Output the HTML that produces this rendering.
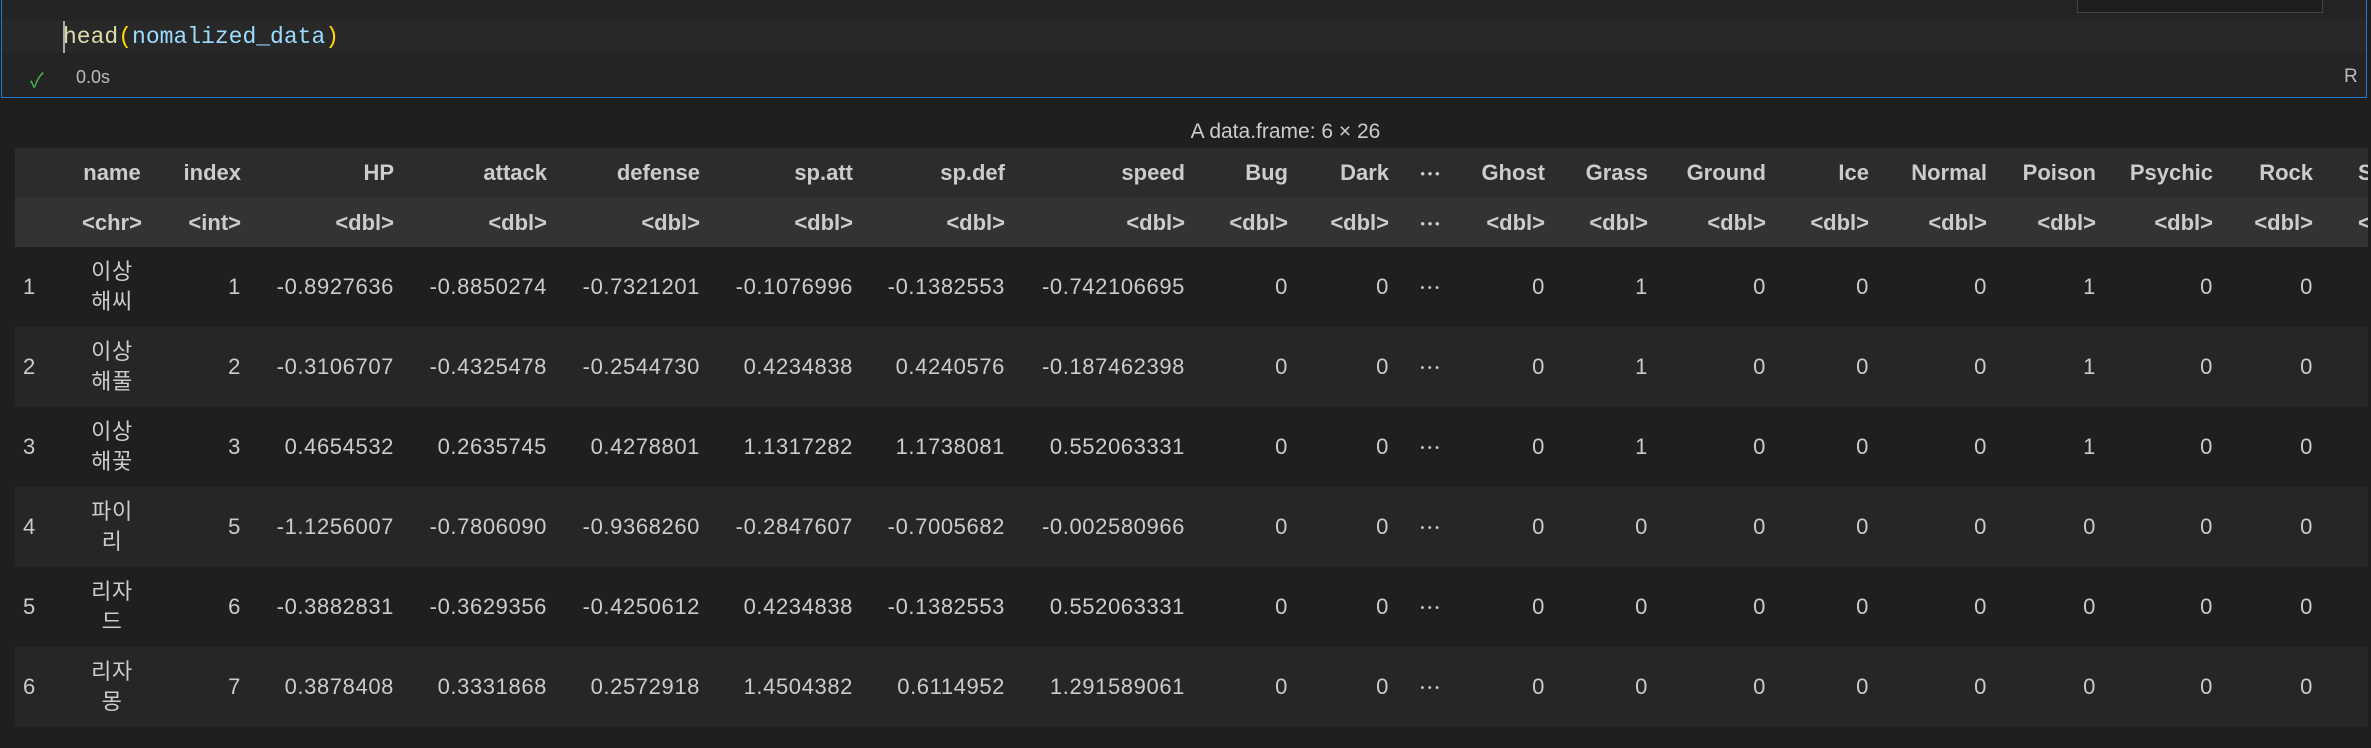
<!DOCTYPE html>
<html><head><meta charset="utf-8"><style>
body{margin:0;width:2371px;height:738px;overflow:hidden;background:#1f1f1f;font-family:"Liberation Sans","Noto Sans CJK KR",sans-serif;color:#cccccc;position:relative}
.cell{position:absolute;left:1px;top:-2px;width:2366px;height:100px;background:#242424;border:1px solid #1f78c8;box-sizing:border-box}
.band{position:absolute;left:0;right:0;top:21px;height:32px;background:#282828}
.code{position:absolute;left:63px;top:22px;font:23px "Liberation Mono",monospace;line-height:30px}
.cur{position:absolute;left:63px;top:21px;width:2px;height:32px;background:#aaa}
.tick{position:absolute;left:30px;top:64px;color:#4fb04f;font-size:20px}
.time{position:absolute;left:76px;top:67px;font-size:18px;color:#bbb}
.r{position:absolute;left:2344px;top:66px;font-size:19px;color:#bbb}
.box{position:absolute;left:2077px;top:-2px;width:244px;height:13px;border:1px solid #444;background:#1e1e1e}
.cap{position:absolute;left:0;width:2571px;top:120px;text-align:center;font-size:21px;color:#ccc}
.wrap{position:absolute;left:15px;top:148px;width:2353px;height:600px;overflow:hidden}
table{border-collapse:collapse;table-layout:fixed;width:2398px;font-size:22px;letter-spacing:0.6px}
td{padding:0;text-align:right;white-space:nowrap;overflow:visible}
tr.h1{background:#2c2c2c;height:50px;font-weight:bold;letter-spacing:0}
tr.h2{background:#333;height:49px;font-weight:bold;letter-spacing:0}
tr.d{height:80px;background:#1f1f1f}
tr.e{height:80px;background:#262626}
td.n{text-align:left;padding-left:8px}
td.nm{text-align:center;line-height:30px}
td.dot{text-align:center}
</style></head><body>
<div class="cell"><div class="band"></div></div>
<div class="box"></div>
<div class="cur"></div>
<div class="code"><span style="color:#dcdcaa">head</span><span style="color:#ffd700">(</span><span style="color:#9cdcfe">nomalized_data</span><span style="color:#ffd700">)</span></div>
<div class="tick">✓</div><div class="time">0.0s</div><div class="r">R</div>
<div class="cap">A data.frame: 6 × 26</div>
<div class="wrap"><table>
<colgroup><col style="width:55px"><col style="width:84px"><col style="width:87px"><col style="width:153px"><col style="width:153px"><col style="width:153px"><col style="width:153px"><col style="width:152px"><col style="width:180px"><col style="width:103px"><col style="width:101px"><col style="width:82px"><col style="width:74px"><col style="width:103px"><col style="width:118px"><col style="width:103px"><col style="width:118px"><col style="width:109px"><col style="width:117px"><col style="width:100px"><col style="width:100px"></colgroup>
<tr class="h1"><td></td><td class="nm">name</td><td>index</td><td>HP</td><td>attack</td><td>defense</td><td>sp.att</td><td>sp.def</td><td>speed</td><td>Bug</td><td>Dark</td><td class="dot">⋯</td><td>Ghost</td><td>Grass</td><td>Ground</td><td>Ice</td><td>Normal</td><td>Poison</td><td>Psychic</td><td>Rock</td><td style="text-align:left;padding-left:45px">Steel</td></tr>
<tr class="h2"><td></td><td class="nm">&lt;chr&gt;</td><td>&lt;int&gt;</td><td>&lt;dbl&gt;</td><td>&lt;dbl&gt;</td><td>&lt;dbl&gt;</td><td>&lt;dbl&gt;</td><td>&lt;dbl&gt;</td><td>&lt;dbl&gt;</td><td>&lt;dbl&gt;</td><td>&lt;dbl&gt;</td><td class="dot">⋯</td><td>&lt;dbl&gt;</td><td>&lt;dbl&gt;</td><td>&lt;dbl&gt;</td><td>&lt;dbl&gt;</td><td>&lt;dbl&gt;</td><td>&lt;dbl&gt;</td><td>&lt;dbl&gt;</td><td>&lt;dbl&gt;</td><td style="text-align:left;padding-left:45px">&lt;dbl&gt;</td></tr>
<tr class="d"><td class="n">1</td><td class="nm">이상<br>해씨</td><td>1</td><td>-0.8927636</td><td>-0.8850274</td><td>-0.7321201</td><td>-0.1076996</td><td>-0.1382553</td><td>-0.742106695</td><td>0</td><td>0</td><td class="dot">⋯</td><td>0</td><td>1</td><td>0</td><td>0</td><td>0</td><td>1</td><td>0</td><td>0</td><td></td></tr>
<tr class="e"><td class="n">2</td><td class="nm">이상<br>해풀</td><td>2</td><td>-0.3106707</td><td>-0.4325478</td><td>-0.2544730</td><td>0.4234838</td><td>0.4240576</td><td>-0.187462398</td><td>0</td><td>0</td><td class="dot">⋯</td><td>0</td><td>1</td><td>0</td><td>0</td><td>0</td><td>1</td><td>0</td><td>0</td><td></td></tr>
<tr class="d"><td class="n">3</td><td class="nm">이상<br>해꽃</td><td>3</td><td>0.4654532</td><td>0.2635745</td><td>0.4278801</td><td>1.1317282</td><td>1.1738081</td><td>0.552063331</td><td>0</td><td>0</td><td class="dot">⋯</td><td>0</td><td>1</td><td>0</td><td>0</td><td>0</td><td>1</td><td>0</td><td>0</td><td></td></tr>
<tr class="e"><td class="n">4</td><td class="nm">파이<br>리</td><td>5</td><td>-1.1256007</td><td>-0.7806090</td><td>-0.9368260</td><td>-0.2847607</td><td>-0.7005682</td><td>-0.002580966</td><td>0</td><td>0</td><td class="dot">⋯</td><td>0</td><td>0</td><td>0</td><td>0</td><td>0</td><td>0</td><td>0</td><td>0</td><td></td></tr>
<tr class="d"><td class="n">5</td><td class="nm">리자<br>드</td><td>6</td><td>-0.3882831</td><td>-0.3629356</td><td>-0.4250612</td><td>0.4234838</td><td>-0.1382553</td><td>0.552063331</td><td>0</td><td>0</td><td class="dot">⋯</td><td>0</td><td>0</td><td>0</td><td>0</td><td>0</td><td>0</td><td>0</td><td>0</td><td></td></tr>
<tr class="e"><td class="n">6</td><td class="nm">리자<br>몽</td><td>7</td><td>0.3878408</td><td>0.3331868</td><td>0.2572918</td><td>1.4504382</td><td>0.6114952</td><td>1.291589061</td><td>0</td><td>0</td><td class="dot">⋯</td><td>0</td><td>0</td><td>0</td><td>0</td><td>0</td><td>0</td><td>0</td><td>0</td><td></td></tr>
</table></div>
</body></html>
